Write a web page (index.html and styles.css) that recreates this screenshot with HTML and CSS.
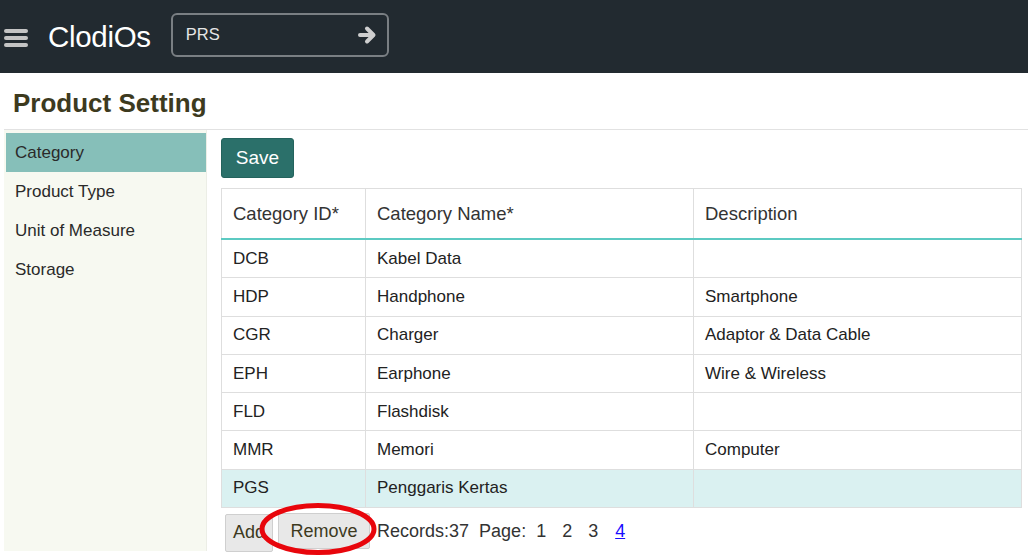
FILE: index.html
```html
<!DOCTYPE html>
<html>
<head>
<meta charset="utf-8">
<link rel="stylesheet" href="styles.css">
</head>
<body>
<header class="topbar">
  <svg class="burger" width="24" height="20" viewBox="0 0 24 20"><rect x="0" y="1" width="24" height="4" rx="2" fill="#c4c4c4"/><rect x="0" y="8" width="24" height="4" rx="2" fill="#c4c4c4"/><rect x="0" y="15" width="24" height="4" rx="2" fill="#c4c4c4"/></svg>
  <span class="brand">ClodiOs</span>
  <div class="search">
    <span class="search-text">PRS</span>
    <svg class="go" width="20" height="20" viewBox="0 0 20 20"><path d="M3 10H16M10 3.5L16.5 10L10 16.5" fill="none" stroke="#cfcfcf" stroke-width="4" stroke-linecap="round" stroke-linejoin="round"/></svg>
  </div>
</header>
<h1 class="title">Product Setting</h1>
<div class="content">
  <nav class="sidebar">
    <div class="nav-item active">Category</div>
    <div class="nav-item">Product Type</div>
    <div class="nav-item">Unit of Measure</div>
    <div class="nav-item">Storage</div>
  </nav>
  <main class="main">
    <button class="save">Save</button>
    <table class="grid">
      <colgroup><col class="c1"><col class="c2"><col class="c3"></colgroup>
      <thead><tr><th>Category ID*</th><th>Category Name*</th><th>Description</th></tr></thead>
      <tbody>
        <tr><td>DCB</td><td>Kabel Data</td><td></td></tr>
        <tr><td>HDP</td><td>Handphone</td><td>Smartphone</td></tr>
        <tr><td>CGR</td><td>Charger</td><td>Adaptor &amp; Data Cable</td></tr>
        <tr><td>EPH</td><td>Earphone</td><td>Wire &amp; Wireless</td></tr>
        <tr><td>FLD</td><td>Flashdisk</td><td></td></tr>
        <tr><td>MMR</td><td>Memori</td><td>Computer</td></tr>
        <tr class="selected"><td>PGS</td><td>Penggaris Kertas</td><td></td></tr>
      </tbody>
    </table>
    <div class="footer">
      <button class="btn add">Add</button>
      <button class="btn remove">Remove</button>
      <span class="records">Records:37</span>
      <span class="page">Page:</span>
      <span class="pg first">1</span><span class="pg">2</span><span class="pg">3</span><a class="pg cur" href="#">4</a>
      <svg class="circle" width="124" height="56" viewBox="0 0 124 56"><ellipse cx="60" cy="27" rx="56" ry="23.5" fill="none" stroke="#e8060c" stroke-width="5"/></svg>
    </div>
  </main>
</div>
</body>
</html>
```
FILE: styles.css
```css
html, body { margin: 0; padding: 0; background: #fff; }
body { font-family: "Liberation Sans", Arial, sans-serif; color: #222; width: 1028px; height: 555px; overflow: hidden; }

.topbar { height: 73px; background: #222a30; display: flex; align-items: center; box-sizing: border-box; padding-left: 4px; }
.burger { display: block; margin-top: 2px; }
.brand { color: #fff; font-size: 29.5px; margin-left: 20px; letter-spacing: -0.3px; }
.search { margin-left: 20px; margin-top: -4px; width: 218px; height: 44px; box-sizing: border-box; border: 2px solid #7a7f83; border-radius: 6px; display: flex; align-items: center; justify-content: space-between; padding: 0 10px 0 13px; }
.search-text { color: #e6e6e6; font-size: 16.5px; }
.go { display: block; }

.title { margin: 0 0 0 4px; height: 57px; box-sizing: border-box; padding: 15px 0 0 9px; font-size: 26px; font-weight: bold; color: #3d3a1e; border-bottom: 1px solid #e2e2e2; }

.content { display: flex; margin-left: 4px; height: 421px; }
.sidebar { width: 204px; background: #f7f9f1; border-right: 1px solid #eceee6; box-sizing: border-box; padding: 3px 0 0 2px; }
.nav-item { height: 39px; line-height: 39px; padding-left: 9px; font-size: 17px; color: #2a2a2a; }
.nav-item.active { background: #86bfb9; }

.main { flex: 1; padding: 8px 6px 0 13px; position: relative; }
.save { display: block; margin-left: 1px; width: 73px; height: 40px; border: 1px solid #24635d; border-radius: 3px; background: #2b706a; color: #fff; font-family: inherit; font-size: 19px; padding: 0; }

.grid { margin-top: 10px; margin-left: 1px; width: 800px; border-collapse: collapse; table-layout: fixed; font-size: 17px; }
.c1 { width: 144px; } .c2 { width: 328px; } .c3 { width: 328px; }
.grid th, .grid td { border: 1px solid #dedede; text-align: left; padding: 0 0 0 11px; }
.grid th { height: 49px; font-weight: normal; color: #333; font-size: 18.5px; border-bottom: 2px solid #5ccac2; }
.grid td { height: 37.3px; color: #222; }
.grid tr.selected td { background: #daf1f1; }

.footer { display: flex; align-items: center; height: 44px; margin-top: 1px; position: relative; font-size: 18px; color: #333; }
.btn { height: 36px; border: 1px solid #cfcfcf; border-radius: 2px; background: #e8e8e8; font-family: inherit; font-size: 18px; color: #3d3a1e; padding: 0 7px; }
.add { margin-left: 5px; height: 38px; margin-top: 3px; }
.remove { margin-left: 5px; width: 92px; }
.records { margin-left: 7px; }
.page { margin-left: 10px; }
.pg { margin-left: 16px; }
.pg.first { margin-left: 10px; }
.cur { color: #1a0dff; text-decoration: underline; margin-left: 17px; }
.circle { position: absolute; left: 38px; top: -7px; }
```
